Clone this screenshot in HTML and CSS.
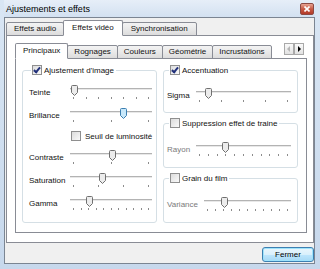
FILE: index.html
```html
<!DOCTYPE html>
<html lang="fr">
<head>
  <meta charset="UTF-8">
  <title>Ajustements et effets</title>
  <link rel="stylesheet" href="styles.css">
</head>
<body>
  <div class="window">
    <div class="titlebar">
      <span class="title">Ajustements et effets</span>
      <span class="close">
        <svg width="6" height="6" viewBox="0 0 6 6"><path d="M0.5 0.5 L5.5 5.5 M5.5 0.5 L0.5 5.5" stroke="#fff" stroke-width="1.6"/></svg>
      </span>
    </div>

    <div class="client">
      <div class="tabs outer-tabs">
        <span class="tab">Effets audio</span>
        <span class="tab active">Effets vidéo</span>
        <span class="tab">Synchronisation</span>
      </div>

      <div class="pane outer-pane">
        <div class="tabs inner-tabs">
          <span class="tab active">Principaux</span>
          <span class="tab">Rognages</span>
          <span class="tab">Couleurs</span>
          <span class="tab">Géométrie</span>
          <span class="tab">Incrustations</span>
          <div class="scroller">
            <span class="arrow left disabled"></span>
            <span class="arrow right"></span>
          </div>
        </div>

        <div class="pane inner-pane">
          <fieldset class="group image-group">
            <legend><span class="check on"></span>Ajustement d'image</legend>
            <div class="rows">
              <span class="label">Teinte</span>
              <div class="slider">
                <span class="thumb" style="left: 1%"><svg width="7" height="11" viewBox="0 0 7 11"><path d="M1.5 0.5 H5.5 Q6.5 0.5 6.5 1.5 V7.5 L3.5 10.5 L0.5 7.5 V1.5 Q0.5 0.5 1.5 0.5 Z"/></svg></span>
                <div class="track"></div>
                <div class="ticks"><i></i><i></i><i></i><i></i><i></i><i></i><i></i></div>
              </div>

              <span class="label">Brillance</span>
              <div class="slider">
                <span class="thumb hot" style="left: 61%"><svg width="7" height="11" viewBox="0 0 7 11"><path d="M1.5 0.5 H5.5 Q6.5 0.5 6.5 1.5 V7.5 L3.5 10.5 L0.5 7.5 V1.5 Q0.5 0.5 1.5 0.5 Z"/></svg></span>
                <div class="track"></div>
                <div class="ticks"><i></i><i></i><i></i></div>
              </div>

              <span></span>
              <label class="checkrow"><span class="check"></span>Seuil de luminosité</label>

              <span class="label">Contraste</span>
              <div class="slider">
                <span class="thumb" style="left: 48%"><svg width="7" height="11" viewBox="0 0 7 11"><path d="M1.5 0.5 H5.5 Q6.5 0.5 6.5 1.5 V7.5 L3.5 10.5 L0.5 7.5 V1.5 Q0.5 0.5 1.5 0.5 Z"/></svg></span>
                <div class="track"></div>
                <div class="ticks"><i></i><i></i><i></i></div>
              </div>

              <span class="label">Saturation</span>
              <div class="slider">
                <span class="thumb" style="left: 35%"><svg width="7" height="11" viewBox="0 0 7 11"><path d="M1.5 0.5 H5.5 Q6.5 0.5 6.5 1.5 V7.5 L3.5 10.5 L0.5 7.5 V1.5 Q0.5 0.5 1.5 0.5 Z"/></svg></span>
                <div class="track"></div>
                <div class="ticks"><i></i><i></i><i></i><i></i></div>
              </div>

              <span class="label">Gamma</span>
              <div class="slider">
                <span class="thumb" style="left: 20%"><svg width="7" height="11" viewBox="0 0 7 11"><path d="M1.5 0.5 H5.5 Q6.5 0.5 6.5 1.5 V7.5 L3.5 10.5 L0.5 7.5 V1.5 Q0.5 0.5 1.5 0.5 Z"/></svg></span>
                <div class="track"></div>
                <div class="ticks"><i></i><i></i><i></i><i></i><i></i><i></i><i></i><i></i><i></i><i></i><i></i></div>
              </div>
            </div>
          </fieldset>

          <div class="column">
            <fieldset class="group sharpen">
              <legend><span class="check on"></span>Accentuation</legend>
              <div class="row">
                <span class="label">Sigma</span>
                <div class="slider">
                  <span class="thumb" style="left: 10%"><svg width="7" height="11" viewBox="0 0 7 11"><path d="M1.5 0.5 H5.5 Q6.5 0.5 6.5 1.5 V7.5 L3.5 10.5 L0.5 7.5 V1.5 Q0.5 0.5 1.5 0.5 Z"/></svg></span>
                  <div class="track"></div>
                  <div class="ticks"><i></i><i></i><i></i><i></i><i></i></div>
                </div>
              </div>
            </fieldset>

            <fieldset class="group">
              <legend><span class="check"></span>Suppression effet de traine</legend>
              <div class="row">
                <span class="label off">Rayon</span>
                <div class="slider">
                  <span class="thumb" style="left: 27%"><svg width="7" height="11" viewBox="0 0 7 11"><path d="M1.5 0.5 H5.5 Q6.5 0.5 6.5 1.5 V7.5 L3.5 10.5 L0.5 7.5 V1.5 Q0.5 0.5 1.5 0.5 Z"/></svg></span>
                  <div class="track"></div>
                  <div class="ticks"><i></i><i></i><i></i><i></i><i></i><i></i><i></i><i></i><i></i><i></i><i></i></div>
                </div>
              </div>
            </fieldset>

            <fieldset class="group grain">
              <legend><span class="check"></span>Grain du film</legend>
              <div class="row">
                <span class="label off">Variance</span>
                <div class="slider">
                  <span class="thumb" style="left: 19%"><svg width="7" height="11" viewBox="0 0 7 11"><path d="M1.5 0.5 H5.5 Q6.5 0.5 6.5 1.5 V7.5 L3.5 10.5 L0.5 7.5 V1.5 Q0.5 0.5 1.5 0.5 Z"/></svg></span>
                  <div class="track"></div>
                  <div class="ticks"><i></i><i></i><i></i><i></i><i></i><i></i><i></i><i></i><i></i><i></i><i></i></div>
                </div>
              </div>
            </fieldset>
          </div>
        </div>
      </div>

      <div class="buttons">
        <button class="btn">Fermer</button>
      </div>
    </div>
  </div>
</body>
</html>
```

FILE: styles.css
```css
body {
  margin: 0;
  font-family: "Liberation Sans", Arial, sans-serif;
  font-size: 8px;
  color: #111;
}

.window {
  width: 320px;
  height: 269px;
  box-sizing: border-box;
  padding: 0 5px 5px 4px;
  background: linear-gradient(#d9e6f4, #c7d8ec);
  display: flex;
  flex-direction: column;
}

.titlebar {
  height: 17px;
  display: flex;
  align-items: center;
  justify-content: space-between;
  padding: 0 1px 0 2px;
  background: linear-gradient(#e6eef8, #d3e1f1);
}

.title {
  font-size: 9px;
  color: #000;
}

.close {
  width: 12px;
  height: 10px;
  margin-top: 1px;
  border: 1px solid #8c4a43;
  border-radius: 2px;
  background: linear-gradient(#e8a493, #c75a45 50%, #b33a28);
  display: flex;
  align-items: center;
  justify-content: center;
}

.client {
  flex: 1;
  border: 1px solid #7b8592;
  background: #f0f0f0;
  padding: 2px 0 0 1px;
  display: flex;
  flex-direction: column;
}

/* tabs */

.tabs {
  display: flex;
  align-items: flex-end;
  position: relative;
  z-index: 1;
  margin-bottom: -1px;
}

.tab {
  height: 12px;
  line-height: 12px;
  padding: 0 7px;
  border: 1px solid #898c95;
  border-radius: 2px 2px 0 0;
  margin-right: -1px;
  background: linear-gradient(#f3f3f3, #e9e9e9 50%, #dcdcdc);
  white-space: nowrap;
}

.tab.active {
  height: 14px;
  line-height: 14px;
  background: #fff;
  border-bottom-color: #fff;
  position: relative;
  z-index: 2;
}

.outer-tabs .tab {
  padding: 0 8px;
}

.outer-tabs .tab:first-child {
  padding: 0 7px;
}

.pane {
  border: 1px solid #898c95;
  background: #fff;
}

.outer-pane {
  flex: 1;
  padding: 7px 6px 9px 8px;
  display: flex;
  flex-direction: column;
}

.inner-tabs {
  overflow: hidden;
}

.inner-tabs .tab {
  padding: 0 6px;
}

.inner-tabs .tab.active {
  padding: 0 7px;
}

.scroller {
  position: absolute;
  right: 3px;
  top: 0;
  display: flex;
  background: #fff;
  padding-left: 1px;
}

.arrow {
  width: 8px;
  height: 10px;
  border: 1px solid #a9a9a9;
  background: linear-gradient(#fafafa, #e2e2e2);
  position: relative;
}

.arrow::after {
  content: "";
  position: absolute;
  top: 2px;
  border-top: 3px solid transparent;
  border-bottom: 3px solid transparent;
}

.arrow.left::after {
  left: 2px;
  border-right: 3px solid #b5b5b5;
}

.arrow.right::after {
  left: 3px;
  border-left: 3px solid #000;
}

.inner-pane {
  flex: 1;
  padding: 6px 8px 9px 6px;
  display: grid;
  grid-template-columns: 1fr 1fr;
  column-gap: 6px;
}

/* group boxes */

.group {
  margin: 0;
  padding: 10px 5px 10px 6px;
  border: 1px solid #d5dfe5;
  border-radius: 3px;
  min-width: 0;
}

.group legend {
  padding: 0 2px 0 1px;
  margin-left: 2px;
  display: flex;
  align-items: center;
  gap: 2px;
  height: 10px;
  white-space: nowrap;
}

.column {
  display: flex;
  flex-direction: column;
  gap: 5px;
}

.column .group {
  padding: 14px 6px 11px 3px;
}

.column .sharpen {
  padding-top: 13px;
  padding-bottom: 10px;
}

.column .grain {
  flex: 1;
  padding-bottom: 10px;
}

.check {
  width: 8px;
  height: 8px;
  border: 1px solid #8f8f8f;
  background: linear-gradient(135deg, #dcdcdc, #fafafa);
  display: inline-block;
  position: relative;
  box-sizing: content-box;
  flex-shrink: 0;
}

.check.on::after {
  content: "";
  position: absolute;
  left: 2px;
  top: 0;
  width: 2px;
  height: 5px;
  border: solid #21307a;
  border-width: 0 2px 2px 0;
  transform: rotate(40deg);
}

.rows {
  display: grid;
  grid-template-columns: 41px 1fr;
  row-gap: 9px;
  align-items: center;
}

.row {
  display: flex;
  align-items: center;
  gap: 6px;
}

.row .slider {
  flex: 1;
}

.label {
  color: #111;
}

.label.off {
  color: #7a7a7a;
}

.checkrow {
  display: flex;
  align-items: center;
  gap: 4px;
  margin-left: 1px;
  white-space: nowrap;
}

/* sliders */

.slider {
  position: relative;
  height: 14px;
}

.track {
  margin-top: 3px;
  height: 1px;
  background: #b3b3b3;
  border-bottom: 1px solid #e8e8e8;
}

.ticks {
  display: flex;
  justify-content: space-between;
  padding: 0 3px;
  margin-top: 7px;
}

.ticks i {
  width: 1px;
  height: 2px;
  background: #8c8c8c;
}

.thumb {
  position: absolute;
  top: 0;
  width: 7px;
  height: 11px;
  z-index: 1;
}

.thumb svg {
  display: block;
}

.thumb path {
  fill: #ececec;
  stroke: #707070;
  stroke-width: 1;
}

.thumb.hot path {
  fill: #c8e8fa;
  stroke: #3c7fb1;
}

/* button row */

.buttons {
  display: flex;
  justify-content: flex-end;
  padding: 4px 0 1px;
}

.btn {
  font-family: inherit;
  font-size: 8px;
  width: 52px;
  height: 15px;
  padding: 0;
  border: 1px solid #3c7fb1;
  border-radius: 3px;
  background: linear-gradient(#eaf6fd, #d9f0fc 50%, #bee6fd 51%, #a7d9f5);
  box-shadow: inset 0 0 0 1px #9ee3fb;
  color: #000;
}
```
